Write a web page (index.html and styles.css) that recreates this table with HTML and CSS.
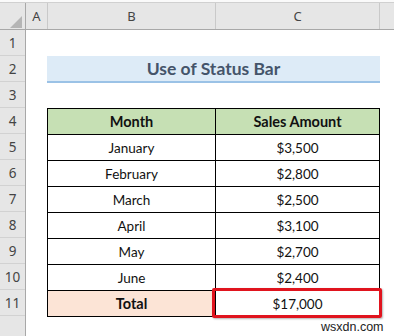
FILE: index.html
```html
<!DOCTYPE html>
<html lang="en">
<head>
  <meta charset="UTF-8">
  <title>Use of Status Bar</title>
  <link rel="stylesheet" href="styles.css">
</head>
<body>
  <div class="topbar"></div>

  <!-- column headers -->
  <div class="colheads">
    <div class="corner">
      <svg width="26" height="27" viewBox="0 0 26 27"><polygon points="22,13 22,25 10,25" fill="#b5b5b5"/></svg>
    </div>
    <div class="colhead col-a">A</div>
    <div class="colhead col-b">B</div>
    <div class="colhead col-c">C</div>
    <div class="colhead col-d"></div>
  </div>

  <div class="sheet">
    <div class="rowheads">
      <div class="rowhead">1</div>
      <div class="rowhead">2</div>
      <div class="rowhead">3</div>
      <div class="rowhead">4</div>
      <div class="rowhead">5</div>
      <div class="rowhead">6</div>
      <div class="rowhead">7</div>
      <div class="rowhead">8</div>
      <div class="rowhead">9</div>
      <div class="rowhead">10</div>
      <div class="rowhead">11</div>
      <div class="rowhead"></div>
    </div>

    <div class="cells">
      <div class="title">Use of Status Bar</div>

      <div class="data">
        <div class="cell head">Month</div>
        <div class="cell head">Sales Amount</div>

        <div class="cell">January</div>
        <div class="cell">$3,500</div>
        <div class="cell">February</div>
        <div class="cell">$2,800</div>
        <div class="cell">March</div>
        <div class="cell">$2,500</div>
        <div class="cell">April</div>
        <div class="cell">$3,100</div>
        <div class="cell">May</div>
        <div class="cell">$2,700</div>
        <div class="cell">June</div>
        <div class="cell">$2,400</div>

        <div class="cell total">Total</div>
        <div class="cell selected">$17,000<span class="highlight"></span></div>
      </div>
    </div>
  </div>

  <div class="watermark">wsxdn.com</div>
</body>
</html>
```

FILE: styles.css
```css
body {
  margin: 0;
  background-color: #fff;
  font-family: Lato, "Noto Sans", sans-serif;
  color: #000;
  overflow: hidden;
}

.topbar {
  height: 2px;
  border-bottom: 1px solid #d0d0d0;
  background-color: #fafafa;
}

.colheads {
  display: flex;
  height: 27px;
  background-color: #e6e6e6;
  border-bottom: 1px solid #a8a8a8;
  box-sizing: border-box;
}

.corner {
  width: 26px;
  border-right: 1px solid #a8a8a8;
  box-sizing: border-box;
}

.corner svg {
  display: block;
}

.colhead {
  display: flex;
  align-items: center;
  justify-content: center;
  border-right: 1px solid #c9c9c9;
  box-sizing: border-box;
  font-family: "Noto Sans", sans-serif;
  font-size: 13px;
  color: #444;
}

.col-a { width: 22px; }
.col-b { width: 168px; }
.col-c { width: 164px; }
.col-d { flex: 1; border-right: none; }

.sheet {
  display: flex;
}

.rowheads {
  width: 26px;
  flex-shrink: 0;
  background-color: #e6e6e6;
  border-right: 1px solid #a8a8a8;
  box-sizing: border-box;
}

.rowhead {
  height: 26px;
  border-bottom: 1px solid #d2d2d2;
  box-sizing: border-box;
  display: flex;
  align-items: center;
  justify-content: center;
  font-family: "Noto Sans", sans-serif;
  font-size: 13.5px;
  color: #444;
}

.cells {
  padding-left: 21px;
  padding-top: 26px;
}

.title {
  width: 333px;
  height: 27px;
  box-sizing: border-box;
  background-color: #ddebf7;
  border-bottom: 2px solid #9bc2e6;
  margin-bottom: 25px;
  display: flex;
  align-items: center;
  justify-content: center;
  font-size: 17.5px;
  font-weight: 700;
  color: #44546a;
}

.data {
  display: grid;
  grid-template-columns: 168px 164px;
  border-top: 1px solid #000;
  border-left: 1px solid #000;
  width: 332px;
}

.cell {
  position: relative;
  height: 26px;
  box-sizing: border-box;
  border-right: 1px solid #000;
  border-bottom: 1px solid #000;
  display: flex;
  align-items: center;
  justify-content: center;
  font-size: 13.5px;
  color: #111;
}

.head {
  background-color: #c6e0b4;
  font-weight: 700;
  font-size: 14.5px;
}

.total {
  background-color: #fce4d6;
  font-weight: 700;
  font-size: 14.5px;
}

.highlight {
  position: absolute;
  left: -4px;
  right: -3px;
  top: -3px;
  bottom: -2px;
  border: 3px solid #e0141e;
  border-radius: 2px;
  box-shadow: 1px 1px 2px rgba(0,0,0,0.3);
}

.watermark {
  position: absolute;
  left: 321px;
  top: 320px;
  font-family: "Liberation Sans", sans-serif;
  font-size: 12.5px;
  color: #222;
}
```
